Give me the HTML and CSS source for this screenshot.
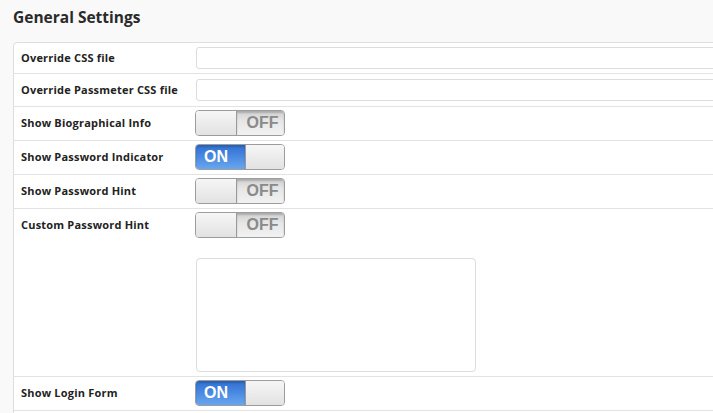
FILE: index.html
```html
<!DOCTYPE html>
<html>
<head>
<meta charset="utf-8">
<link rel="stylesheet" href="styles.css">
</head>
<body>
<h2 class="title">General Settings</h2>
<div class="panel">
  <div class="row irow">
    <div class="label lbl-input">Override CSS file</div>
    <div class="control"><input class="text" type="text"></div>
  </div>
  <div class="row irow">
    <div class="label lbl-input">Override Passmeter CSS file</div>
    <div class="control"><input class="text" type="text"></div>
  </div>
  <div class="row trow">
    <div class="label lbl-toggle">Show Biographical Info</div>
    <div class="control">
      <div class="toggle off"><span class="knob"></span><span class="state">OFF</span></div>
    </div>
  </div>
  <div class="row trow">
    <div class="label lbl-toggle">Show Password Indicator</div>
    <div class="control">
      <div class="toggle on"><span class="state">ON</span><span class="knob"></span></div>
    </div>
  </div>
  <div class="row trow">
    <div class="label lbl-toggle">Show Password Hint</div>
    <div class="control">
      <div class="toggle off"><span class="knob"></span><span class="state">OFF</span></div>
    </div>
  </div>
  <div class="row trow">
    <div class="label lbl-toggle">Custom Password Hint</div>
    <div class="control stack">
      <div class="toggle off"><span class="knob"></span><span class="state">OFF</span></div>
      <textarea class="area"></textarea>
    </div>
  </div>
  <div class="row trow">
    <div class="label lbl-toggle">Show Login Form</div>
    <div class="control">
      <div class="toggle on"><span class="state">ON</span><span class="knob"></span></div>
    </div>
  </div>
  <div class="row trow empty"></div>
</div>
</body>
</html>
```
FILE: styles.css
```css
html, body {
  margin: 0;
  padding: 0;
  background: #f9f9f9;
  font-family: "Open Sans", "Liberation Sans", sans-serif;
  color: #333;
  overflow: hidden;
}
.title {
  margin: 0;
  padding: 6px 0 0 13px;
  height: 36px;
  font-size: 15.5px;
  font-weight: 700;
  color: #2a2a2a;
  line-height: 22px;
}
.panel {
  margin-left: 13px;
  width: 760px;
  background: #fff;
  border: 1px solid #dedede;
  border-top-left-radius: 4px;
  min-height: 400px;
}
.row {
  display: flex;
  border-bottom: 1px solid #e3e3e3;
  padding: 4px 0 4px 7px;
}
.irow + .irow {
  padding-top: 5px;
  padding-bottom: 5px;
}
.trow {
  padding: 3px 0 4px 7px;
}
.label {
  width: 174px;
  flex: none;
  font-size: 11px;
  font-weight: 700;
  letter-spacing: 0.2px;
  color: #222;
}
.lbl-input { line-height: 22px; }
.lbl-toggle { line-height: 26px; }
.control { flex: 1; display: flex; }
.stack { flex-direction: column; align-items: flex-start; }
.text {
  margin: 0 0 0 1px;
  width: 560px;
  height: 22px;
  box-sizing: border-box;
  border: 1px solid #dcdcdc;
  border-radius: 3px;
  background: #fff;
  padding: 0 6px;
}
.area {
  display: block;
  margin: 20px 0 0 1px;
  width: 280px;
  height: 114px;
  box-sizing: border-box;
  border: 1px solid #dcdcdc;
  border-radius: 4px;
  resize: none;
  background: #fff;
}
.empty { height: 26px; border-bottom: none; }
.toggle {
  width: 90px;
  height: 26px;
  box-sizing: border-box;
  border: 1px solid #9c9c9c;
  border-radius: 4px;
  overflow: hidden;
  display: flex;
  font-family: "Liberation Sans", Arial, sans-serif;
  font-weight: 700;
  font-size: 16px;
}
.knob {
  width: 40px;
  flex: none;
  background: linear-gradient(#f6f6f6, #e2e2e2);
}
.state {
  flex: 1;
  display: flex;
  align-items: center;
  line-height: 24px;
}
.off .knob { border-right: 1px solid #9a9a9a; }
.off .state {
  justify-content: center;
  padding-left: 4px;
  color: #8a8a8a;
  background: linear-gradient(#cfcfcf, #e6e6e6 40%, #f2f2f2);
  box-shadow: inset 0 2px 2px rgba(0,0,0,0.18);
}
.on .knob { width: 38px; border-left: 1px solid #9a9a9a; }
.on .state {
  color: #fff;
  padding-left: 8px;
  background: linear-gradient(#2f6fd1, #4a8ae2 50%, #6aa6ee);
  box-shadow: inset 0 2px 2px rgba(0,0,0,0.15);
}
```
